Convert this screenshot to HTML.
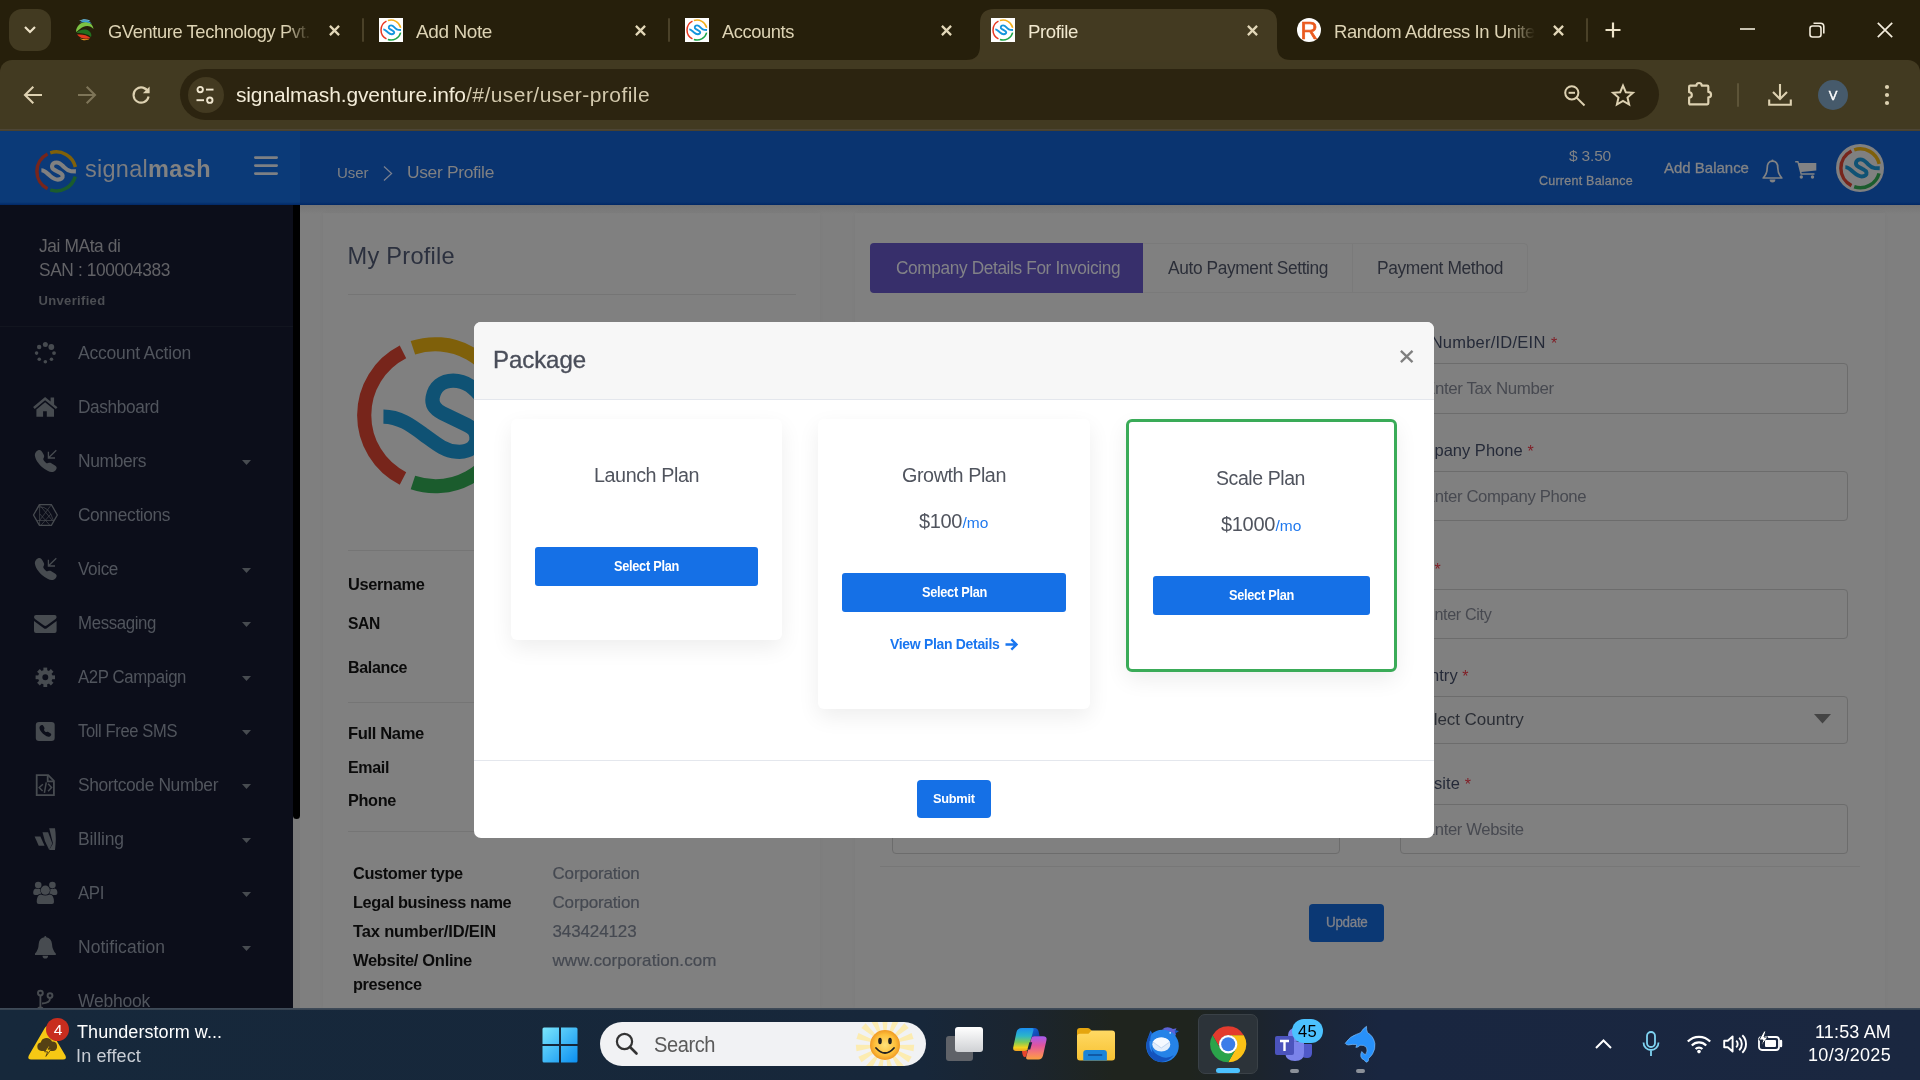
<!DOCTYPE html>
<html lang="en">
<head>
<meta charset="utf-8">
<title>Profile</title>
<style>
html,body{margin:0;padding:0;width:1920px;height:1080px;overflow:hidden;background:#7f7f7f;font-family:"Liberation Sans",sans-serif;}
#root{position:absolute;left:0;top:0;width:1920px;height:1080px;overflow:hidden;will-change:transform;}
.a{position:absolute;box-sizing:border-box;}
.t{position:absolute;white-space:nowrap;line-height:1;transform-origin:0 0;font-family:"Liberation Sans",sans-serif;}
svg{position:absolute;overflow:visible;}
</style>
</head>
<body>
<div id="root">
<!-- ================= APP (dimmed by modal backdrop) ================= -->
<div class="a" style="left:0;top:130px;width:1920px;height:878px;background:#7f7f7f"></div>
<!-- cards -->
<div class="a" style="left:323px;top:213px;width:497px;height:795px;background:#808080;box-shadow:0 0 4px rgba(0,0,0,.035)"></div>
<div class="a" style="left:855px;top:213px;width:1030px;height:795px;background:#808080;box-shadow:0 0 4px rgba(0,0,0,.035)"></div>
<div class="a" style="left:300px;top:205px;width:1620px;height:9px;background:linear-gradient(180deg,rgba(0,0,0,.075),rgba(0,0,0,0))"></div>
<!-- header -->
<div class="a" style="left:0;top:130px;width:1920px;height:75px;background:#0a3470"></div>
<div class="a" style="left:0;top:130px;width:300px;height:75px;background:#0b3a78"></div>
<div class="a" style="left:0;top:202px;width:1920px;height:3px;background:linear-gradient(180deg,rgba(0,30,90,0),rgba(0,38,100,.9))"></div>
<svg style="left:32.6px;top:147.6px;--c1:#77251b;--c2:#7f600a;--c3:#1b5c2d;--c4:#808080;--sw:0.18;--sw4:0.21" width="46.8" height="46.8"><use href="#sm" width="46.8" height="46.8"/></svg>
<svg style="left:253px;top:155px" width="26" height="21" viewBox="0 0 26 21"><path d="M2.3 2.6H23.7M2.3 10.6H23.7M2.3 18.6H23.7" stroke="#7e8084" stroke-width="2.6" stroke-linecap="round" fill="none"/></svg>
<svg style="left:383px;top:165.5px" width="10" height="15" viewBox="0 0 10 15"><path d="M1 0.5L8.6 7.5L1 14.5" stroke="#7a8090" stroke-width="1.2" fill="none"/></svg>
<!-- bell -->
<svg style="left:1760px;top:158px" width="25" height="26" viewBox="0 0 25 26"><path d="M12.5 3.2C8.5 3.2 7.2 6.5 7.2 10C7.2 15 5.5 17.5 3.2 20H21.8C19.5 17.5 17.8 15 17.8 10C17.8 6.5 16.5 3.2 12.5 3.2Z" fill="none" stroke="#818284" stroke-width="1.7" stroke-linejoin="round"/><circle cx="12.5" cy="2.7" r="1.1" fill="#818284"/><path d="M9.6 21.6A2.9 2.9 0 0 0 15.4 21.6Z" fill="#818284"/></svg>
<!-- cart -->
<svg style="left:1794px;top:160px" width="24" height="20" viewBox="0 0 24 20"><path d="M1.2 1H4.4L5 3H22.3V10.4L7.4 12L7.8 13.3H20.5V14.8H6.6L3.4 2.6H1.2Z" fill="#818284"/><circle cx="7.3" cy="17" r="1.7" fill="#818284"/><circle cx="18.5" cy="17" r="1.7" fill="#818284"/></svg>
<!-- avatar -->
<div class="a" style="left:1836px;top:144px;width:48px;height:48px;border-radius:50%;background:#808080"></div>
<svg style="left:1836.7px;top:144.7px;--c1:#77251b;--c2:#7f600a;--c3:#1b5c2d;--c4:#0f5274;--sw:0.18;--sw4:0.2" width="46.6" height="46.6"><use href="#sm" width="46.6" height="46.6"/></svg>
<!-- sidebar -->
<div class="a" style="left:0;top:205px;width:293px;height:803px;background:#0c0e1a"></div>
<div class="a" style="left:0;top:326px;width:293px;height:1px;background:#12151f"></div>
<div class="a" style="left:293px;top:205px;width:7px;height:803px;background:#7a7a7a"></div>
<div class="a" style="left:293px;top:205px;width:7px;height:614px;background:#000;border-radius:0 0 3.5px 3.5px"></div>
<!-- sidebar icons -->
<svg style="left:25px;top:335px" width="80" height="45" viewBox="0 0 80 45" fill="#474b50"><circle cx="20.33" cy="9.5" r="2.5"/><circle cx="26.33" cy="12" r="2.9"/><circle cx="29.04" cy="18.1" r="1.9"/><circle cx="26.46" cy="24.3" r="1.8"/><circle cx="20.33" cy="26.75" r="1.8"/><circle cx="14.25" cy="24.3" r="1.8"/><circle cx="11.58" cy="18.1" r="1.8"/><circle cx="14.17" cy="12" r="2.2"/></svg>
<svg style="left:25px;top:385px" width="80" height="45" viewBox="0 0 80 45" fill="#474b50"><g transform="translate(7.9 11.9)"><path d="M0.2 10L12.2 0.2L17.7 4.7V0.5H21.2V7.5L24.6 10.3L23 12.2L12.2 3.4L1.8 12Z"/><path d="M3.5 12.5L12.2 5.4L21.1 12.6V19.8H13.9V14.3H10.2V19.8H3.5Z"/></g></svg>
<svg style="left:25px;top:439px" width="80" height="45" viewBox="0 0 80 45"><g transform="translate(9 10.8)"><path d="M1 6.5C0.5 4 2 1 5 0.3C6.5 0 7.5 1 8.5 2.8L10 5.5C10.5 7 9.8 8 9.3 9C9 10 10.5 12 12.5 13.5C14 13.5 15 12.5 16.5 13L21 15.8C23 17 23 18.5 22 20C21 21.5 19.5 22.3 17.5 22.3C13 21.5 8 18 4.5 13.5C2.5 11 1.5 9 1 6.5Z" fill="#474b50"/><path d="M22.3 0.5L14.6 7.9M14.4 2V8.2H21" fill="none" stroke="#474b50" stroke-width="1.3"/></g></svg>
<svg style="left:25px;top:493px" width="80" height="45" viewBox="0 0 80 45" fill="none" stroke="#474b50"><g transform="translate(7.9 11)"><path d="M0.6 11L6.5 0.7H18.5L24.4 11L18.5 21.3H6.5Z" stroke-width="1.3"/><path d="M6.5 0.7L19.5 16.5M18.5 0.7L6.7 16.5M6.7 1V21M4 16.5H21M8 21.3L18 10M17 21.3L7 10M6.7 3Q16 2 20.5 16.5M3 7L6.7 1" stroke-width="0.7"/></g></svg>
<svg style="left:25px;top:547px" width="80" height="45" viewBox="0 0 80 45"><g transform="translate(9 10.8)"><path d="M1 6.5C0.5 4 2 1 5 0.3C6.5 0 7.5 1 8.5 2.8L10 5.5C10.5 7 9.8 8 9.3 9C9 10 10.5 12 12.5 13.5C14 13.5 15 12.5 16.5 13L21 15.8C23 17 23 18.5 22 20C21 21.5 19.5 22.3 17.5 22.3C13 21.5 8 18 4.5 13.5C2.5 11 1.5 9 1 6.5Z" fill="#474b50"/><path d="M22.3 0.5L14.6 7.9M14.4 2V8.2H21" fill="none" stroke="#474b50" stroke-width="1.3"/></g></svg>
<svg style="left:25px;top:601px" width="80" height="45" viewBox="0 0 80 45" fill="#474b50"><g transform="translate(9 14)"><path d="M2 0H20.6Q22.6 0 22.6 2Q22.6 3.2 21.6 3.9L12.6 10.6Q11.3 11.5 10 10.6L1 3.9Q0 3.2 0 2Q0 0 2 0Z"/><path d="M0 6L9.8 13.2Q11.3 14.2 12.8 13.2L22.6 6V16Q22.6 18 20.6 18H2Q0 18 0 16Z"/></g></svg>
<svg style="left:25px;top:655px" width="80" height="45" viewBox="0 0 80 45"><g transform="translate(20.3 22.3)"><circle r="5.1" fill="none" stroke="#474b50" stroke-width="4.3"/><g fill="#474b50"><rect x="-1.9" y="-9.7" width="3.8" height="3.4"/><rect x="-1.9" y="-9.7" width="3.8" height="3.4" transform="rotate(45)"/><rect x="-1.9" y="-9.7" width="3.8" height="3.4" transform="rotate(90)"/><rect x="-1.9" y="-9.7" width="3.8" height="3.4" transform="rotate(135)"/><rect x="-1.9" y="-9.7" width="3.8" height="3.4" transform="rotate(180)"/><rect x="-1.9" y="-9.7" width="3.8" height="3.4" transform="rotate(225)"/><rect x="-1.9" y="-9.7" width="3.8" height="3.4" transform="rotate(270)"/><rect x="-1.9" y="-9.7" width="3.8" height="3.4" transform="rotate(315)"/></g></g></svg>
<svg style="left:25px;top:709px" width="80" height="45" viewBox="0 0 80 45"><rect x="10.8" y="12.9" width="18.9" height="19" rx="3.2" fill="#474b50"/><g transform="translate(14 15.8) scale(0.54)"><path d="M1 6.5C0.5 4 2 1 5 0.3C6.5 0 7.5 1 8.5 2.8L10 5.5C10.5 7 9.8 8 9.3 9C9 10 10.5 12 12.5 13.5C14 13.5 15 12.5 16.5 13L21 15.8C23 17 23 18.5 22 20C21 21.5 19.5 22.3 17.5 22.3C13 21.5 8 18 4.5 13.5C2.5 11 1.5 9 1 6.5Z" fill="#0c0e1a"/></g></svg>
<svg style="left:25px;top:763px" width="80" height="45" viewBox="0 0 80 45" fill="none" stroke="#474b50"><path d="M11.7 12.1H23.2L28.9 17.8V32.2H11.7Z" stroke-width="1.8"/><path d="M22.7 12.1V18.3H28.9" stroke-width="1.8"/><path d="M17.9 21.2L14.2 24.5L17.6 28.1M21.25 19.4L19.4 29.8M23.1 20.8L26.6 24.5L23.1 28.3" stroke-width="1.5"/></svg>
<svg style="left:25px;top:817px" width="80" height="45" viewBox="0 0 80 45" fill="#474b50"><path d="M9.6 19.4H15.4L19.6 28.75H13.75Z"/><path d="M17.5 15.2H23.1L27.3 26.5L24.2 32.9L19.9 24Z" opacity="0.95"/><path d="M24.2 11.2H30Q31.6 21 30 32.9H24.2L28 26.5Z"/></svg>
<svg style="left:25px;top:871px" width="80" height="45" viewBox="0 0 80 45" fill="#474b50"><circle cx="13.2" cy="14.1" r="3.3"/><circle cx="27.4" cy="14.1" r="3.3"/><path d="M8.2 22Q8.2 17.8 11 17.5Q13 18.5 15.3 17.7Q14.6 20.5 16.3 22.5Q13.5 23 12.7 24H10Q8.2 24 8.2 22Z"/><path d="M32.4 22Q32.4 17.8 29.6 17.5Q27.6 18.5 25.3 17.7Q26 20.5 24.3 22.5Q27.1 23 27.9 24H30.6Q32.4 24 32.4 22Z"/><circle cx="20.3" cy="19.2" r="4.6"/><path d="M11.7 31Q11.7 23.7 16 23.4Q20.3 25.6 24.6 23.4Q29 23.7 29 31Q29 33 27 33H13.7Q11.7 33 11.7 31Z"/></svg>
<svg style="left:25px;top:925px" width="80" height="45" viewBox="0 0 80 45" fill="#474b50"><path d="M20.3 11Q21.3 11 21.3 12.3Q26.5 13.5 27 19Q27.3 25 30.8 28.5V30H10V28.5Q13.5 25 13.7 19Q14 13.5 19.3 12.3Q19.3 11 20.3 11Z"/><path d="M17.5 30.8A2.8 2.8 0 0 0 23.1 30.8Z"/></svg>
<svg style="left:25px;top:975px" width="80" height="45" viewBox="0 0 80 45" fill="none" stroke="#474b50"><circle cx="15.4" cy="18.1" r="2.4" stroke-width="2"/><circle cx="25" cy="20.6" r="2.4" stroke-width="2"/><circle cx="15.4" cy="35" r="2.4" stroke-width="2"/><path d="M15.4 21V32.5M25 23.5Q25 28 17 28.5" stroke-width="1.8"/></svg>
<!-- carets -->
<svg style="left:241.5px;top:459.5px" width="9" height="5" viewBox="0 0 9 5"><path d="M0 0H9L4.5 5Z" fill="#474b50"/></svg>
<svg style="left:241.5px;top:567.5px" width="9" height="5" viewBox="0 0 9 5"><path d="M0 0H9L4.5 5Z" fill="#474b50"/></svg>
<svg style="left:241.5px;top:621.5px" width="9" height="5" viewBox="0 0 9 5"><path d="M0 0H9L4.5 5Z" fill="#474b50"/></svg>
<svg style="left:241.5px;top:675.5px" width="9" height="5" viewBox="0 0 9 5"><path d="M0 0H9L4.5 5Z" fill="#474b50"/></svg>
<svg style="left:241.5px;top:729.5px" width="9" height="5" viewBox="0 0 9 5"><path d="M0 0H9L4.5 5Z" fill="#474b50"/></svg>
<svg style="left:241.5px;top:783.5px" width="9" height="5" viewBox="0 0 9 5"><path d="M0 0H9L4.5 5Z" fill="#474b50"/></svg>
<svg style="left:241.5px;top:837.5px" width="9" height="5" viewBox="0 0 9 5"><path d="M0 0H9L4.5 5Z" fill="#474b50"/></svg>
<svg style="left:241.5px;top:891.5px" width="9" height="5" viewBox="0 0 9 5"><path d="M0 0H9L4.5 5Z" fill="#474b50"/></svg>
<svg style="left:241.5px;top:945.5px" width="9" height="5" viewBox="0 0 9 5"><path d="M0 0H9L4.5 5Z" fill="#474b50"/></svg>

<!-- left card -->
<div class="a" style="left:348px;top:294px;width:448px;height:1px;background:#757575"></div>
<div class="a" style="left:348px;top:550px;width:448px;height:1px;background:#757575"></div>
<div class="a" style="left:348px;top:702px;width:448px;height:1px;background:#757575"></div>
<div class="a" style="left:348px;top:831px;width:448px;height:1px;background:#757575"></div>
<svg style="left:349.8px;top:330.1px;--c1:#77251b;--c2:#7f600a;--c3:#1b5c2d;--c4:#0f5274;" width="170.4" height="170.4"><use href="#smb" width="170.4" height="170.4"/></svg>
<!-- right card tabs -->
<div class="a" style="left:870px;top:243px;width:273px;height:50px;background:#372f6b;border-radius:4px 0 0 4px"></div>
<div class="a" style="left:1143px;top:243px;width:210px;height:50px;border:1px solid #7a7a7a;border-left:none"></div>
<div class="a" style="left:1352px;top:243px;width:176px;height:50px;border:1px solid #7a7a7a;border-radius:0 4px 4px 0"></div>
<!-- inputs -->
<div class="a" style="left:1400px;top:363px;width:448px;height:51px;border:1px solid #6c6c6c;border-radius:4px"></div>
<div class="a" style="left:1400px;top:471px;width:448px;height:50px;border:1px solid #6c6c6c;border-radius:4px"></div>
<div class="a" style="left:1400px;top:589px;width:448px;height:50px;border:1px solid #6c6c6c;border-radius:4px"></div>
<div class="a" style="left:1400px;top:696px;width:448px;height:48px;border:1px solid #6c6c6c;border-radius:4px"></div>
<div class="a" style="left:1400px;top:804px;width:448px;height:50px;border:1px solid #6c6c6c;border-radius:4px"></div>
<div class="a" style="left:892px;top:804px;width:448px;height:50px;border:1px solid #6c6c6c;border-radius:4px"></div>
<svg style="left:1814px;top:714px" width="17" height="10" viewBox="0 0 17 10"><path d="M0 0H17L8.5 9.5Z" fill="#444"/></svg>
<div class="a" style="left:880px;top:866px;width:980px;height:1px;background:#777"></div>
<div class="a" style="left:1309px;top:904px;width:75px;height:38px;background:#0b3874;border-radius:4px"></div>

<span class="t" style="left:85.0px;top:158.0px;font-size:23.5px;font-weight:400;color:#7c7d80;letter-spacing:0.27px;">signal</span>
<span class="t" style="left:148.0px;top:158.0px;font-size:23.5px;font-weight:700;color:#828282;letter-spacing:0.40px;">mash</span>
<span class="t" style="left:337.0px;top:165.1px;font-size:15px;font-weight:400;color:#7e8084;letter-spacing:-0.04px;">User</span>
<span class="t" style="left:407.0px;top:164.0px;font-size:17.4px;font-weight:400;color:#808082;letter-spacing:-0.32px;">User Profile</span>
<span class="t" style="left:1569.0px;top:148.0px;font-size:15.5px;font-weight:400;color:#828385;letter-spacing:-0.18px;">$ 3.50</span>
<span class="t" style="left:1539.0px;top:175.0px;font-size:12.5px;font-weight:400;color:#828385;letter-spacing:0.24px;-webkit-text-stroke:0.3px #828385;">Current Balance</span>
<span class="t" style="left:1664.0px;top:160.1px;font-size:15px;font-weight:400;color:#828385;letter-spacing:-0.01px;-webkit-text-stroke:0.3px #828385;">Add Balance</span>
<span class="t" style="left:38.5px;top:238.0px;font-size:17.5px;font-weight:400;color:#626266;letter-spacing:-0.38px;transform:scaleX(0.9899);">Jai MAta di</span>
<span class="t" style="left:38.5px;top:262.0px;font-size:17.5px;font-weight:400;color:#626266;letter-spacing:-0.38px;transform:scaleX(0.9894);">SAN : 100004383</span>
<span class="t" style="left:38.5px;top:294.1px;font-size:13px;font-weight:700;color:#4c4e53;letter-spacing:0.34px;">Unverified</span>
<span class="t" style="left:78.0px;top:345.0px;font-size:17.5px;font-weight:400;color:#51555d;letter-spacing:-0.20px;">Account Action</span>
<span class="t" style="left:78.0px;top:399.0px;font-size:17.5px;font-weight:400;color:#51555d;letter-spacing:-0.38px;transform:scaleX(0.9859);">Dashboard</span>
<span class="t" style="left:78.0px;top:453.0px;font-size:17.5px;font-weight:400;color:#51555d;letter-spacing:-0.38px;transform:scaleX(0.9955);">Numbers</span>
<span class="t" style="left:78.0px;top:507.0px;font-size:17.5px;font-weight:400;color:#51555d;letter-spacing:-0.38px;transform:scaleX(0.9886);">Connections</span>
<span class="t" style="left:78.0px;top:561.0px;font-size:17.5px;font-weight:400;color:#51555d;letter-spacing:-0.38px;transform:scaleX(0.9783);">Voice</span>
<span class="t" style="left:78.0px;top:615.0px;font-size:17.5px;font-weight:400;color:#51555d;letter-spacing:-0.38px;transform:scaleX(0.9609);">Messaging</span>
<span class="t" style="left:78.0px;top:669.0px;font-size:17.5px;font-weight:400;color:#51555d;letter-spacing:-0.38px;transform:scaleX(0.9577);">A2P Campaign</span>
<span class="t" style="left:78.0px;top:723.0px;font-size:17.5px;font-weight:400;color:#51555d;letter-spacing:-0.38px;transform:scaleX(0.9439);">Toll Free SMS</span>
<span class="t" style="left:78.0px;top:777.0px;font-size:17.5px;font-weight:400;color:#51555d;letter-spacing:-0.38px;transform:scaleX(0.9948);">Shortcode Number</span>
<span class="t" style="left:78.0px;top:831.0px;font-size:17.5px;font-weight:400;color:#51555d;letter-spacing:-0.10px;">Billing</span>
<span class="t" style="left:78.0px;top:885.0px;font-size:17.5px;font-weight:400;color:#51555d;letter-spacing:-0.38px;transform:scaleX(0.9607);">API</span>
<span class="t" style="left:78.0px;top:939.0px;font-size:17.5px;font-weight:400;color:#51555d;letter-spacing:0.04px;">Notification</span>
<span class="t" style="left:78.0px;top:993.0px;font-size:17.5px;font-weight:400;color:#51555d;letter-spacing:-0.23px;">Webhook</span>
<span class="t" style="left:347.5px;top:245.0px;font-size:23.6px;font-weight:400;color:#2b303e;letter-spacing:0.26px;">My Profile</span>
<span class="t" style="left:348.0px;top:576.0px;font-size:17px;font-weight:700;color:#0b0b0b;letter-spacing:-0.37px;transform:scaleX(0.9643);">Username</span>
<span class="t" style="left:348.0px;top:615.0px;font-size:17px;font-weight:700;color:#0b0b0b;letter-spacing:-0.37px;transform:scaleX(0.9200);">SAN</span>
<span class="t" style="left:348.0px;top:659.0px;font-size:17px;font-weight:700;color:#0b0b0b;letter-spacing:-0.37px;transform:scaleX(0.9427);">Balance</span>
<span class="t" style="left:348.0px;top:725.0px;font-size:17px;font-weight:700;color:#0b0b0b;letter-spacing:-0.37px;transform:scaleX(0.9745);">Full Name</span>
<span class="t" style="left:348.0px;top:759.0px;font-size:17px;font-weight:700;color:#0b0b0b;letter-spacing:-0.37px;transform:scaleX(0.9428);">Email</span>
<span class="t" style="left:348.0px;top:792.0px;font-size:17px;font-weight:700;color:#0b0b0b;letter-spacing:-0.37px;transform:scaleX(0.9584);">Phone</span>
<span class="t" style="left:353.0px;top:865.0px;font-size:16.5px;font-weight:700;color:#0b0b0b;letter-spacing:-0.36px;transform:scaleX(0.9900);">Customer type</span>
<span class="t" style="left:353.0px;top:894.0px;font-size:16.5px;font-weight:700;color:#0b0b0b;letter-spacing:-0.36px;transform:scaleX(0.9887);">Legal business name</span>
<span class="t" style="left:353.0px;top:923.0px;font-size:16.5px;font-weight:700;color:#0b0b0b;letter-spacing:-0.15px;">Tax number/ID/EIN</span>
<span class="t" style="left:353.0px;top:952.0px;font-size:16.5px;font-weight:700;color:#0b0b0b;letter-spacing:-0.31px;">Website/ Online</span>
<span class="t" style="left:353.0px;top:976.0px;font-size:16.5px;font-weight:700;color:#0b0b0b;letter-spacing:-0.36px;transform:scaleX(0.9876);">presence</span>
<span class="t" style="left:552.5px;top:865.0px;font-size:17px;font-weight:400;color:#454951;letter-spacing:-0.17px;-webkit-text-stroke:0.2px #454951;">Corporation</span>
<span class="t" style="left:552.5px;top:894.0px;font-size:17px;font-weight:400;color:#454951;letter-spacing:-0.17px;-webkit-text-stroke:0.2px #454951;">Corporation</span>
<span class="t" style="left:552.5px;top:923.0px;font-size:17px;font-weight:400;color:#454951;letter-spacing:-0.12px;-webkit-text-stroke:0.2px #454951;">343424123</span>
<span class="t" style="left:552.5px;top:952.0px;font-size:17px;font-weight:400;color:#454951;letter-spacing:0.08px;-webkit-text-stroke:0.2px #454951;">www.corporation.com</span>
<span class="t" style="left:895.5px;top:260.0px;font-size:17.5px;font-weight:400;color:#828287;letter-spacing:-0.38px;transform:scaleX(0.9862);">Company Details For Invoicing</span>
<span class="t" style="left:1168.0px;top:260.0px;font-size:17.5px;font-weight:400;color:#2b2e38;letter-spacing:-0.38px;transform:scaleX(0.9902);">Auto Payment Setting</span>
<span class="t" style="left:1377.0px;top:260.0px;font-size:17.5px;font-weight:400;color:#2b2e38;letter-spacing:-0.38px;transform:scaleX(0.9929);">Payment Method</span>
<span class="t" style="left:1399.5px;top:334.0px;font-size:16.5px;font-weight:400;color:#252a38;letter-spacing:0.23px;">Tax Number/ID/EIN</span>
<span class="t" style="left:1551.0px;top:336.0px;font-size:16px;font-weight:400;color:#801e26;">*</span>
<span class="t" style="left:1399.6px;top:442.0px;font-size:16.5px;font-weight:400;color:#252a38;letter-spacing:0.01px;">Company Phone</span>
<span class="t" style="left:1527.5px;top:444.0px;font-size:16px;font-weight:400;color:#801e26;">*</span>
<span class="t" style="left:1402.0px;top:560.0px;font-size:16.5px;font-weight:400;color:#252a38;letter-spacing:-0.11px;">City</span>
<span class="t" style="left:1434.5px;top:562.0px;font-size:16px;font-weight:400;color:#801e26;">*</span>
<span class="t" style="left:1399.7px;top:667.0px;font-size:16.5px;font-weight:400;color:#252a38;letter-spacing:0.03px;">Country</span>
<span class="t" style="left:1462.3px;top:669.0px;font-size:16px;font-weight:400;color:#801e26;">*</span>
<span class="t" style="left:1400.0px;top:775.0px;font-size:16.5px;font-weight:400;color:#252a38;letter-spacing:0.10px;">Website</span>
<span class="t" style="left:1464.7px;top:777.0px;font-size:16px;font-weight:400;color:#801e26;">*</span>
<span class="t" style="left:1424.0px;top:380.0px;font-size:17px;font-weight:400;color:#474950;letter-spacing:-0.37px;transform:scaleX(0.9930);">Enter Tax Number</span>
<span class="t" style="left:1424.0px;top:488.0px;font-size:17px;font-weight:400;color:#474950;letter-spacing:-0.37px;transform:scaleX(0.9831);">Enter Company Phone</span>
<span class="t" style="left:1424.0px;top:606.0px;font-size:17px;font-weight:400;color:#474950;letter-spacing:-0.37px;transform:scaleX(0.9506);">Enter City</span>
<span class="t" style="left:1413.0px;top:711.0px;font-size:17px;font-weight:400;color:#2b2e35;letter-spacing:-0.05px;">Select Country</span>
<span class="t" style="left:1424.0px;top:821.0px;font-size:17px;font-weight:400;color:#474950;letter-spacing:-0.37px;transform:scaleX(0.9793);">Enter Website</span>
<span class="t" style="left:1326.2px;top:915.0px;font-size:14px;font-weight:400;color:#808288;letter-spacing:-0.31px;transform:scaleX(0.9582);-webkit-text-stroke:0.3px #808288;">Update</span>
<!-- ================= MODAL ================= -->
<div class="a" style="left:474px;top:322px;width:960px;height:516px;background:#fff;border-radius:7px;overflow:hidden">
 <div class="a" style="left:0;top:0;width:960px;height:78px;background:#f7f7f7;border-bottom:1px solid #e4e7ed"></div>
 <div class="a" style="left:0;top:438px;width:960px;height:1px;background:#e4e7ed"></div>
</div>
<svg style="left:1399.7px;top:350px" width="13.4" height="13" viewBox="0 0 13.4 13"><path d="M0.9 0.9L12.5 12.1M12.5 0.9L0.9 12.1" stroke="#7f7f7f" stroke-width="2.3" fill="none"/></svg>
<div class="a" style="left:511px;top:419px;width:271px;height:221px;background:#fff;border-radius:6px;box-shadow:0 8px 22px rgba(0,0,0,.07)"></div>
<div class="a" style="left:818px;top:419px;width:272px;height:290px;background:#fff;border-radius:6px;box-shadow:0 8px 22px rgba(0,0,0,.07)"></div>
<div class="a" style="left:1126px;top:419px;width:271px;height:253px;background:#fff;border:3px solid #3aab58;border-radius:6px;box-shadow:0 8px 22px rgba(0,0,0,.07)"></div>
<div class="a" style="left:535px;top:547px;width:223px;height:39px;background:#1570e6;border-radius:3px"></div>
<div class="a" style="left:842px;top:573px;width:224px;height:39px;background:#1570e6;border-radius:3px"></div>
<div class="a" style="left:1153px;top:576px;width:217px;height:39px;background:#1570e6;border-radius:3px"></div>
<svg style="left:1005px;top:638px" width="13" height="13" viewBox="0 0 13 13"><path d="M0.5 6.5H11M6.3 1.3L11.5 6.5L6.3 11.7" stroke="#1976f0" stroke-width="2.4" fill="none"/></svg>
<div class="a" style="left:917px;top:780px;width:74px;height:38px;background:#1570e6;border-radius:4px"></div>

<span class="t" style="left:493.0px;top:348.0px;font-size:24px;font-weight:400;color:#4a4e5a;letter-spacing:-0.06px;-webkit-text-stroke:0.35px #4a4e5a;">Package</span>
<span class="t" style="left:594.0px;top:465.0px;font-size:20px;font-weight:400;color:#50545e;letter-spacing:-0.44px;transform:scaleX(0.9872);">Launch Plan</span>
<span class="t" style="left:902.0px;top:465.0px;font-size:20px;font-weight:400;color:#50545e;letter-spacing:-0.44px;transform:scaleX(0.9884);">Growth Plan</span>
<span class="t" style="left:1216.0px;top:468.0px;font-size:20px;font-weight:400;color:#50545e;letter-spacing:-0.44px;transform:scaleX(0.9756);">Scale Plan</span>
<span class="t" style="left:919.0px;top:511.0px;font-size:20px;font-weight:400;color:#50545e;letter-spacing:-0.38px;">$100</span>
<span class="t" style="left:962.5px;top:515.0px;font-size:15.5px;font-weight:400;color:#2079ee;letter-spacing:0.05px;">/mo</span>
<span class="t" style="left:1221.0px;top:514.0px;font-size:20px;font-weight:400;color:#50545e;letter-spacing:-0.33px;">$1000</span>
<span class="t" style="left:1275.5px;top:518.0px;font-size:15.5px;font-weight:400;color:#2079ee;letter-spacing:0.05px;">/mo</span>
<span class="t" style="left:614.0px;top:559.0px;font-size:14px;font-weight:700;color:#ffffff;letter-spacing:-0.31px;transform:scaleX(0.9114);">Select Plan</span>
<span class="t" style="left:921.5px;top:585.0px;font-size:14px;font-weight:700;color:#ffffff;letter-spacing:-0.31px;transform:scaleX(0.9114);">Select Plan</span>
<span class="t" style="left:1229.0px;top:588.0px;font-size:14px;font-weight:700;color:#ffffff;letter-spacing:-0.31px;transform:scaleX(0.9114);">Select Plan</span>
<span class="t" style="left:890.0px;top:637.0px;font-size:14px;font-weight:700;color:#1976f0;letter-spacing:-0.31px;transform:scaleX(0.9984);">View Plan Details</span>
<span class="t" style="left:933.1px;top:792.0px;font-size:13.5px;font-weight:700;color:#ffffff;letter-spacing:-0.30px;transform:scaleX(0.9484);">Submit</span>
<!-- ================= BROWSER CHROME ================= -->
<svg width="0" height="0" style="left:0;top:0">
 <defs>
  <symbol id="sm" viewBox="-1.2 -1.2 2.4 2.4">
   <g fill="none" style="stroke-width:var(--sw,0.15)">
    <path d="M-0.454 0.891A1 1 0 0 1 -0.454 -0.891" stroke="var(--c1)"/>
    <path d="M-0.314 -0.949A1 1 0 0 1 0.974 -0.225" stroke="var(--c2)"/>
    <path d="M0.966 0.259A1 1 0 0 1 -0.314 0.949" stroke="var(--c3)"/>
    <path d="M-0.77 -0.06C-0.6 -0.06 -0.48 0.1 -0.33 0.22C-0.2 0.33 -0.08 0.42 0.07 0.42C0.25 0.42 0.34 0.32 0.32 0.22C0.3 0.12 0.22 0.09 0.12 0.04L-0.1 -0.08C-0.2 -0.13 -0.24 -0.2 -0.22 -0.3C-0.2 -0.4 -0.1 -0.46 0.01 -0.46C0.18 -0.46 0.28 -0.33 0.39 -0.22C0.5 -0.11 0.6 -0.03 0.75 -0.01L1 0" stroke="var(--c4)" style="stroke-width:var(--sw4,0.19)"/>
   </g>
  </symbol>
  <symbol id="smb" viewBox="-1.2 -1.2 2.4 2.4">
   <g fill="none" stroke-width="0.2">
    <path d="M-0.454 0.891A1 1 0 0 1 -0.454 -0.891" stroke="var(--c1)"/>
    <path d="M-0.314 -0.949A1 1 0 0 1 0.974 -0.225" stroke="var(--c2)"/>
    <path d="M0.966 0.259A1 1 0 0 1 -0.314 0.949" stroke="var(--c3)"/>
    <path d="M-0.729 0.019C-0.5 0.02 -0.33 0.15 -0.17 0.268C0 0.39 0.12 0.5 0.3 0.514C0.5 0.53 0.6 0.42 0.58 0.3C0.57 0.22 0.53 0.18 0.45 0.14L0.1 -0.03C-0.02 -0.09 -0.05 -0.17 -0.036 -0.249C-0.01 -0.4 0.1 -0.488 0.253 -0.488C0.5 -0.488 0.6 -0.3 0.75 -0.15C0.85 -0.05 0.92 0 1 0" stroke="var(--c4)" stroke-width="0.2"/>
   </g>
  </symbol>
  <symbol id="tx" viewBox="0 0 12 12"><path d="M1 1L11 11M11 1L1 11" stroke="#e2d7b8" stroke-width="2.5" fill="none"/></symbol>
 </defs>
</svg>
<div class="a" style="left:0;top:0;width:1920px;height:130px;background:#261f0b"></div>
<div class="a" style="left:0;top:60px;width:1920px;height:70px;background:#423a21;border-radius:12px 12px 0 0"></div>
<div class="a" style="left:0;top:129px;width:1920px;height:2px;background:linear-gradient(180deg,#4f4738,#473f2c)"></div>
<!-- tab search -->
<div class="a" style="left:9px;top:9px;width:42px;height:42px;border-radius:13px;background:#423a21"></div>
<svg style="left:23px;top:25px" width="14" height="10" viewBox="0 0 14 10"><path d="M2 2L7 7L12 2" fill="none" stroke="#ece2c8" stroke-width="2.2"/></svg>
<!-- active tab -->
<svg style="left:960px;top:0" width="340" height="62" viewBox="960 0 340 62"><path d="M966 60Q980 60 980 46L980 23Q980 9 994 9L1263 9Q1277 9 1277 23L1277 46Q1277 60 1291 60L1291 62L966 62Z" fill="#433a21"/></svg>
<!-- separators -->
<div class="a" style="left:361.7px;top:18px;width:2.6px;height:24px;background:#4a4128;border-radius:1.3px"></div>
<div class="a" style="left:667.7px;top:18px;width:2.6px;height:24px;background:#4a4128;border-radius:1.3px"></div>
<div class="a" style="left:1585.7px;top:18px;width:2.6px;height:24px;background:#4a4128;border-radius:1.3px"></div>
<!-- favicons -->
<svg style="left:74px;top:19px" width="21" height="22" viewBox="0 0 21 22">
 <path d="M2 13C2 7 7 3 12 3C16 3 19 6 19.5 10C17 7 13 6 9 8C5 10 3 13 2 13Z" fill="#7cc243"/>
 <path d="M6 3.5C9 0.5 15 1 18 5C15 3 10 3 6 3.5Z" fill="#3aa0d8"/>
 <path d="M5 2C9 -0.5 14 0 16.5 2.2C13 1.3 9 1.3 5 2Z" fill="#6cc6ee"/>
 <path d="M2.5 14C5 11 11 9 15 12C17 13.5 18 16 17 18C14 15 9 14 2.5 14Z" fill="#23711f"/>
 <path d="M3 15.5C8 15 13 16 16.5 19C12 20.5 6 19.5 3 15.5Z" fill="#e23a1e"/>
 <path d="M6 19.5C9 20.3 13 20.5 15.5 19.8C13 21.8 8.5 21.8 6 19.5Z" fill="#f39a1d"/>
</svg>
<div class="a" style="left:379px;top:18px;width:24px;height:24px;background:#fff"></div>
<svg style="left:379px;top:18px;--c1:#e8371f;--c2:#f4b01c;--c3:#1ea64a;--c4:#1496dc" width="24" height="24"><use href="#sm" width="24" height="24"/></svg>
<div class="a" style="left:685px;top:18px;width:24px;height:24px;background:#fff"></div>
<svg style="left:685px;top:18px;--c1:#e8371f;--c2:#f4b01c;--c3:#1ea64a;--c4:#1496dc" width="24" height="24"><use href="#sm" width="24" height="24"/></svg>
<div class="a" style="left:991px;top:18px;width:24px;height:24px;background:#fff"></div>
<svg style="left:991px;top:18px;--c1:#e8371f;--c2:#f4b01c;--c3:#1ea64a;--c4:#1496dc" width="24" height="24"><use href="#sm" width="24" height="24"/></svg>
<div class="a" style="left:1297px;top:18px;width:24px;height:24px;border-radius:50%;background:#fff"></div>

<!-- tab close buttons -->
<svg style="left:328.5px;top:24.5px" width="11" height="11"><use href="#tx" width="11" height="11"/></svg>
<svg style="left:634.5px;top:24.5px" width="11" height="11"><use href="#tx" width="11" height="11"/></svg>
<svg style="left:940.5px;top:24.5px" width="11" height="11"><use href="#tx" width="11" height="11"/></svg>
<svg style="left:1246.5px;top:24.5px" width="11" height="11"><use href="#tx" width="11" height="11"/></svg>
<svg style="left:1552.5px;top:24.5px" width="11" height="11"><use href="#tx" width="11" height="11"/></svg>
<!-- new tab, window controls -->
<svg style="left:1605px;top:22px" width="16" height="16" viewBox="0 0 16 16"><path d="M8 0.5V15.5M0.5 8H15.5" stroke="#ece2c8" stroke-width="2.2" fill="none"/></svg>
<svg style="left:1740px;top:28px" width="15" height="2" viewBox="0 0 15 2"><path d="M0 1H15" stroke="#f3ecdc" stroke-width="1.6"/></svg>
<svg style="left:1809px;top:22px" width="16" height="16" viewBox="0 0 16 16"><rect x="1" y="4" width="11" height="11" rx="2.5" fill="none" stroke="#f3ecdc" stroke-width="1.6"/><path d="M4.5 1.2H11.5Q14.8 1.2 14.8 4.5V11.5" fill="none" stroke="#f3ecdc" stroke-width="1.6"/></svg>
<svg style="left:1877px;top:22px" width="16" height="16" viewBox="0 0 16 16"><path d="M0.8 0.8L15.2 15.2M15.2 0.8L0.8 15.2" stroke="#f3ecdc" stroke-width="1.7" fill="none"/></svg>
<!-- toolbar buttons -->
<svg style="left:23px;top:85px" width="20" height="20" viewBox="0 0 20 20"><path d="M19 10H2.5M10.3 1.8L2 10L10.3 18.2" fill="none" stroke="#ddd1b1" stroke-width="2.1"/></svg>
<svg style="left:77px;top:85px" width="20" height="20" viewBox="0 0 20 20"><path d="M1 10H17.5M9.7 1.8L18 10L9.7 18.2" fill="none" stroke="#7e7558" stroke-width="2.1"/></svg>
<svg style="left:131px;top:85px" width="20" height="20" viewBox="0 0 20 20"><path d="M17.2 7.2A7.6 7.6 0 1 0 17.6 11.5" fill="none" stroke="#ddd1b1" stroke-width="2.1"/><path d="M18.6 1.5V8.2H11.9Z" fill="#ddd1b1"/></svg>
<!-- omnibox -->
<div class="a" style="left:180px;top:69px;width:1479px;height:51px;border-radius:25.5px;background:#2c2410"></div>
<div class="a" style="left:187.5px;top:77px;width:36px;height:36px;border-radius:50%;background:#433a21"></div>
<svg style="left:195px;top:85px" width="20" height="20" viewBox="0 0 20 20"><g fill="none" stroke="#efe6cf" stroke-width="1.9"><circle cx="5.2" cy="4.6" r="2.7"/><path d="M11 4.6H18.5"/><circle cx="14.8" cy="15.2" r="2.7"/><path d="M1.5 15.2H9"/></g></svg>
<svg style="left:1563px;top:84px" width="23" height="23" viewBox="0 0 23 23"><g fill="none" stroke="#ddd1b1" stroke-width="2"><circle cx="8.8" cy="8.8" r="6.6"/><path d="M13.6 13.6L21.5 21.5"/><path d="M5.6 8.8H12"/></g></svg>
<svg style="left:1611px;top:83px" width="24" height="24" viewBox="0 0 24 24"><path d="M12 2.6L14.8 9.2L21.9 9.8L16.5 14.5L18.1 21.5L12 17.8L5.9 21.5L7.5 14.5L2.1 9.8L9.2 9.2Z" fill="none" stroke="#ddd1b1" stroke-width="2" stroke-linejoin="miter"/></svg>
<svg style="left:1686.3px;top:79.7px" width="27" height="27" viewBox="0 0 26 26"><path d="M4 5.5H10A2.6 2.6 0 0 1 15.2 5.5H20.5Q21.5 5.5 21.5 6.5V11.5A2.6 2.6 0 0 1 21.5 16.7V22.5Q21.5 23.5 20.5 23.5H4Q3 23.5 3 22.5V17A2.6 2.6 0 0 0 3 11.8V6.5Q3 5.5 4 5.5Z" fill="none" stroke="#ddd1b1" stroke-width="2.1" stroke-linejoin="round"/></svg>
<div class="a" style="left:1737px;top:83px;width:2px;height:24px;background:#5d5438;border-radius:1px"></div>
<svg style="left:1768px;top:83px" width="24" height="24" viewBox="0 0 24 24"><g fill="none" stroke="#ddd1b1" stroke-width="2.1"><path d="M12 1V15.5M5 9L12 16L19 9"/><path d="M1.2 16.5V21.8H22.8V16.5"/></g></svg>
<div class="a" style="left:1818px;top:80px;width:30px;height:30px;border-radius:50%;background:#465a6b"></div>
<svg style="left:1884px;top:84px" width="6" height="22" viewBox="0 0 6 22"><g fill="#ddd1b1"><circle cx="3" cy="3" r="2.1"/><circle cx="3" cy="11" r="2.1"/><circle cx="3" cy="19" r="2.1"/></g></svg>

<span class="t" style="left:108.0px;top:22.0px;font-size:19px;font-weight:400;color:#ddd3b4;letter-spacing:-0.42px;transform:scaleX(0.9650);">GVenture Technology Pvt.</span>
<span class="t" style="left:416.0px;top:22.0px;font-size:19px;font-weight:400;color:#ddd3b4;letter-spacing:-0.40px;">Add Note</span>
<span class="t" style="left:722.0px;top:22.0px;font-size:19px;font-weight:400;color:#ddd3b4;letter-spacing:-0.42px;transform:scaleX(0.9624);">Accounts</span>
<span class="t" style="left:1028.0px;top:22.0px;font-size:19px;font-weight:400;color:#f1e8cf;letter-spacing:-0.42px;transform:scaleX(0.9817);">Profile</span>
<span class="t" style="left:1334.0px;top:22.0px;font-size:19px;font-weight:400;color:#ddd3b4;letter-spacing:-0.42px;transform:scaleX(0.9715);">Random Address In Unite</span>
<span class="t" style="left:1300.5px;top:19.0px;font-size:24px;font-weight:400;color:#ea5a1f;-webkit-text-stroke:0.7px #ea5a1f;">R</span>
<span class="t" style="left:236.0px;top:84.0px;font-size:21px;font-weight:400;color:#f3ecd8;letter-spacing:-0.15px;">signalmash.gventure.info</span>
<span class="t" style="left:466.0px;top:84.0px;font-size:21px;font-weight:400;color:#d3c9ad;letter-spacing:0.45px;">/#/user/user-profile</span>
<span class="t" style="left:1828.7px;top:89.0px;font-size:13px;font-weight:400;color:#ffffff;-webkit-text-stroke:0.4px #fff;">V</span>
<!-- tab title fades -->
<div class="a" style="left:286px;top:20px;width:28px;height:24px;background:linear-gradient(90deg,rgba(38,31,11,0),#261f0b 90%)"></div>
<div class="a" style="left:1508px;top:20px;width:30px;height:24px;background:linear-gradient(90deg,rgba(38,31,11,0),#261f0b 90%)"></div>

<!-- ================= TASKBAR ================= -->
<div class="a" style="left:0;top:1008px;width:1920px;height:72px;background:linear-gradient(90deg,#16283b 0%,#17273a 48%,#1b2530 53%,#1f241e 58%,#1f241e 62%,#1b2433 67%,#192640 72%,#1a2740 100%)"></div>
<div class="a" style="left:0;top:1008px;width:1920px;height:2px;background:linear-gradient(180deg,#424d5a,#35414f)"></div>
<!-- weather -->
<svg style="left:27px;top:1022px" width="41" height="39" viewBox="0 0 41 39"><path d="M17.6 6.2Q19.9 2.2 22.2 6.2L38.4 33.5Q40.2 37.6 36 37.6H4.2Q0 37.6 1.8 33.5Z" fill="#f5c814"/><path d="M14.5 29A4.3 4.3 0 0 1 13.7 20.5A6 6 0 0 1 25 19.5A4.8 4.8 0 0 1 26.2 29Z" fill="#554114"/><path d="M21.5 24L17.6 29.8H20.6L18.9 34.4L24.2 27.2H21L22.9 24Z" fill="#f5c814" stroke="#554114" stroke-width="0.9"/></svg>
<div class="a" style="left:46.3px;top:1017.7px;width:23px;height:23px;border-radius:50%;background:#c82d1e"></div>
<!-- start -->
<svg style="left:542px;top:1027px" width="36" height="36" viewBox="0 0 36 36"><defs><linearGradient id="wg" x1="0" y1="0" x2="1" y2="1"><stop offset="0" stop-color="#7ae6fc"/><stop offset="1" stop-color="#0b8ff2"/></linearGradient></defs><path d="M0.5 2Q0.5 0.5 2 0.5H17V17H0.5ZM19 0.5H34Q35.5 0.5 35.5 2V17H19ZM0.5 19H17V35.5H2Q0.5 35.5 0.5 34ZM19 19H35.5V34Q35.5 35.5 34 35.5H19Z" fill="url(#wg)"/></svg>
<!-- search -->
<div class="a" style="left:600px;top:1022px;width:326px;height:44px;border-radius:22px;background:#f1f2f4;overflow:hidden"><svg style="left:255px;top:-7px" width="60" height="60" viewBox="-30 -30 60 60"><defs><radialGradient id="sg"><stop offset="0" stop-color="#ffe27a"/><stop offset="0.7" stop-color="#fdbf3a"/><stop offset="1" stop-color="#f09a25"/></radialGradient></defs><g fill="#ffeaa0" opacity="0.8"><path d="M-3.2 -29L3.2 -29L1.4 -13L-1.4 -13Z" transform="rotate(0)"/><path d="M-3.2 -29L3.2 -29L1.4 -13L-1.4 -13Z" transform="rotate(24)"/><path d="M-3.2 -29L3.2 -29L1.4 -13L-1.4 -13Z" transform="rotate(48)"/><path d="M-3.2 -29L3.2 -29L1.4 -13L-1.4 -13Z" transform="rotate(72)"/><path d="M-3.2 -29L3.2 -29L1.4 -13L-1.4 -13Z" transform="rotate(96)"/><path d="M-3.2 -29L3.2 -29L1.4 -13L-1.4 -13Z" transform="rotate(120)"/><path d="M-3.2 -29L3.2 -29L1.4 -13L-1.4 -13Z" transform="rotate(144)"/><path d="M-3.2 -29L3.2 -29L1.4 -13L-1.4 -13Z" transform="rotate(168)"/><path d="M-3.2 -29L3.2 -29L1.4 -13L-1.4 -13Z" transform="rotate(192)"/><path d="M-3.2 -29L3.2 -29L1.4 -13L-1.4 -13Z" transform="rotate(216)"/><path d="M-3.2 -29L3.2 -29L1.4 -13L-1.4 -13Z" transform="rotate(240)"/><path d="M-3.2 -29L3.2 -29L1.4 -13L-1.4 -13Z" transform="rotate(264)"/><path d="M-3.2 -29L3.2 -29L1.4 -13L-1.4 -13Z" transform="rotate(288)"/><path d="M-3.2 -29L3.2 -29L1.4 -13L-1.4 -13Z" transform="rotate(312)"/><path d="M-3.2 -29L3.2 -29L1.4 -13L-1.4 -13Z" transform="rotate(336)"/></g><circle r="15" fill="url(#sg)"/><ellipse cx="-5" cy="-4" rx="1.8" ry="3.2" fill="#222"/><ellipse cx="5" cy="-4" rx="1.8" ry="3.2" fill="#222"/><path d="M-9 3Q0 13 9 3" fill="none" stroke="#222" stroke-width="1.8" stroke-linecap="round"/></svg></div>
<svg style="left:615px;top:1032.3px" width="24" height="24" viewBox="0 0 24 24"><circle cx="9.5" cy="9.5" r="7.6" fill="none" stroke="#333" stroke-width="2.2"/><path d="M15 15L21.5 21.5" stroke="#333" stroke-width="2.6" stroke-linecap="round"/></svg>

<!-- task view -->
<div class="a" style="left:946px;top:1036px;width:27px;height:25px;border-radius:3px;background:#5f6268"></div>
<div class="a" style="left:955px;top:1027px;width:28px;height:25px;border-radius:3px;background:linear-gradient(180deg,#fff,#cfd1d4)"></div>
<!-- copilot -->
<svg style="left:1013px;top:1028px" width="34" height="32" viewBox="0 0 34 32"><defs><linearGradient id="cp1" x1="0" y1="0" x2="0" y2="1"><stop offset="0" stop-color="#1b8df0"/><stop offset="0.35" stop-color="#2cb6c9"/><stop offset="0.62" stop-color="#7ccb58"/><stop offset="0.85" stop-color="#f3d21f"/><stop offset="1" stop-color="#f0a020"/></linearGradient><linearGradient id="cp2" x1="0" y1="0" x2="0" y2="1"><stop offset="0" stop-color="#a45cf0"/><stop offset="0.4" stop-color="#e0559f"/><stop offset="0.75" stop-color="#f7806a"/><stop offset="1" stop-color="#f9a03f"/></linearGradient><linearGradient id="cp3" x1="0" y1="0" x2="1" y2="1"><stop offset="0" stop-color="#1767d8"/><stop offset="1" stop-color="#0f3fa6"/></linearGradient></defs>
<path d="M16 0H21.5Q24.8 0 25.6 3.5L26.6 8.2H21Q19 8.2 18.5 10Z" fill="url(#cp3)"/>
<path d="M5.2 1.2Q6.5 0 9 0H19Q21 0 20.5 2L15.2 21Q14.5 23 12 23H3Q-0.5 23 0.3 19L3.5 4Q4 1.8 5.2 1.2Z" fill="url(#cp1)"/>
<path d="M9 23H14.5L13.5 27Q13 30 10.8 28.8Q9.4 27.6 9 23Z" fill="#e8452c"/>
<path d="M21 8.2H30Q34.3 8.2 33.5 12L30 27.5Q29 31.5 25.5 31.5H15Q12.5 31.5 13.3 28.5L18.5 10Q19 8.2 21 8.2Z" fill="url(#cp2)"/><path d="M16.4 14.3H19.2L17.2 21.6H14.4Z" fill="#17263a"/></svg>
<!-- folder -->
<svg style="left:1077px;top:1028px" width="38" height="33" viewBox="0 0 38 33"><defs><linearGradient id="fg" x1="0" y1="0" x2="0" y2="1"><stop offset="0" stop-color="#ffd964"/><stop offset="1" stop-color="#f7c232"/></linearGradient></defs><path d="M0 3Q0 0 3 0H10.5Q12 0 13 1L14.5 2.6V9H0Z" fill="#e5a50f"/><path d="M0 8.5Q0 5.7 3 5.7H11.5L14.5 2.6H35Q38 2.6 38 5.6V29.5Q38 32.5 35 32.5H3Q0 32.5 0 29.5Z" fill="url(#fg)"/><path d="M6.25 25Q6.25 21.9 9.4 21.9H26.8Q29.9 21.9 29.9 25V32.5H6.25Z" fill="#1a84d8"/><path d="M11.1 27H25.2" stroke="#0f4f98" stroke-width="1.6"/></svg>
<!-- thunderbird -->
<svg style="left:1143px;top:1026px" width="38" height="37" viewBox="0 0 38 37"><path d="M4.5 13L7.5 4.5Q9.5 8 12 11Z" fill="#1b62d0"/><circle cx="19.5" cy="20" r="16.3" fill="#2583e8"/><circle cx="25.5" cy="9" r="7" fill="#2583e8"/><path d="M19 3.5Q24 -0.5 30 3L33.5 2.2L32 5.5Q33 7.5 32.5 9.5Q29 4.5 19 3.5Z" fill="#5b62d6"/><path d="M31.5 4L36 5L32.3 7.6Z" fill="#1a59c4"/><circle cx="27.2" cy="6.8" r="0.9" fill="#dfe9fa"/><path d="M3.3 20Q3.5 11 9 6.5Q6 13 8 20Q10 28 19 31Q25 33 31 29Q25 36.5 17 36Q5 34 3.3 20Z" fill="#1453bd"/><path d="M6.5 15Q5.5 22 9.5 27Q7.5 21 8.5 15.5Z" fill="#2f8cf0"/><ellipse cx="18.3" cy="18.5" rx="9" ry="7" fill="#e3eefb"/><path d="M10 15.5L18.3 21.5L26.6 15.5Q24 11.5 18.3 11.5Q12.6 11.5 10 15.5Z" fill="#f5f9ff"/><path d="M9.8 16L18.3 22L26.8 16" fill="none" stroke="#c5d8f2" stroke-width="1"/></svg>
<!-- chrome -->
<div class="a" style="left:1198px;top:1014px;width:60px;height:60px;border-radius:7px;background:#2c3339;border:1px solid #3a4147"></div>
<svg style="left:1209.8px;top:1025.7px" width="36.4" height="36.4" viewBox="-18.2 -18.2 36.4 36.4"><path d="M-15.59 -9A18 18 0 0 1 15.59 -9L0 -9A9 9 0 0 0 -7.79 4.5Z" fill="#e33b2e"/><path d="M15.59 -9A18 18 0 0 1 0 18L7.79 4.5A9 9 0 0 0 0 -9Z" fill="#fbc116"/><path d="M0 18A18 18 0 0 1 -15.59 -9L-7.79 4.5A9 9 0 0 0 7.79 4.5Z" fill="#2aa34a"/><circle r="9.2" fill="#fff"/><circle r="7" fill="#3b7de9"/></svg>
<div class="a" style="left:1216px;top:1068px;width:24px;height:5px;border-radius:2.5px;background:#4cc2ff"></div>
<!-- teams -->
<svg style="left:1274px;top:1026.5px" width="38" height="34" viewBox="0 0 38 34"><circle cx="21" cy="8" r="7" fill="#7b83eb"/><circle cx="32" cy="11" r="4.5" fill="#5059c9"/><path d="M26 17H37Q38 17 38 18V26Q38 31 33 31Q28 31 26 27Z" fill="#5059c9"/><path d="M11 15H29Q30 15 30 16V26Q30 34 21 34Q12 34 11 26Z" fill="#7b83eb"/><rect x="1" y="9" width="19" height="19" rx="2" fill="#4b53bc"/><path d="M6 14H15M10.5 14V24" stroke="#fff" stroke-width="2.4" fill="none"/></svg>
<div class="a" style="left:1292px;top:1019px;width:31px;height:24px;border-radius:12px;background:#4cc2ff"></div>
<div class="a" style="left:1290px;top:1069px;width:9px;height:4px;border-radius:2px;background:#8b9099"></div>
<!-- dolphin -->
<svg style="left:1344px;top:1025px" width="34" height="39" viewBox="0 0 34 39"><path d="M1.2 18.3Q6 11 12.7 9.2Q15 8.5 16.8 7.4Q19 3.5 22.5 1.3Q22.3 5 23.5 7.6Q29.5 11 30.9 18.5Q31.5 24 28.5 29Q26.5 32 24.5 33.5Q25 36 23 37.3Q21 36.8 20 34.8Q17.5 34.2 16.8 31.5Q16.5 28.5 17.8 26.5Q19.5 28.8 21.5 29.8Q24 26 22.5 22.5Q20 19.5 16 20.3Q14 22.8 11.8 22.3Q12.8 20.8 12.5 19.6Q8 19 4.5 20Q2 20 1.2 18.3Z" fill="#2891fa" stroke="#8cc4fb" stroke-width="0.6"/></svg>
<div class="a" style="left:1356px;top:1069px;width:9px;height:4px;border-radius:2px;background:#8b9099"></div>
<!-- tray -->
<svg style="left:1595px;top:1039px" width="17" height="10" viewBox="0 0 17 10"><path d="M1 9L8.5 1.5L16 9" fill="none" stroke="#fff" stroke-width="2"/></svg>
<svg style="left:1642px;top:1031px" width="18" height="26" viewBox="0 0 18 26"><rect x="5" y="1" width="8" height="15" rx="4" fill="none" stroke="#7fd4f2" stroke-width="1.8"/><path d="M1.5 11.5A7.5 7.5 0 0 0 16.5 11.5M9 19V25" fill="none" stroke="#7fd4f2" stroke-width="1.8"/></svg>
<svg style="left:1686px;top:1033.5px" width="26" height="20" viewBox="0 0 26 20"><g fill="none" stroke="#fff" stroke-width="2.2"><path d="M1.8 7.6A15.5 15.5 0 0 1 24.2 7.6"/><path d="M5.8 11.4A10 10 0 0 1 20.2 11.4"/><path d="M9.6 15A4.8 4.8 0 0 1 16.4 15"/></g><circle cx="13" cy="17.6" r="1.8" fill="#fff"/></svg>
<svg style="left:1723px;top:1033px" width="25" height="22" viewBox="0 0 25 22"><g fill="none" stroke="#fff" stroke-width="1.9"><path d="M1.2 7.8H4.8L9.6 3.4V18.6L4.8 14.2H1.2Z" stroke-linejoin="round"/><path d="M13.2 7.6A4.6 4.6 0 0 1 13.2 14.4"/><path d="M16.2 4.8A8.6 8.6 0 0 1 16.2 17.2"/><path d="M19.3 2.2A12.3 12.3 0 0 1 19.3 19.8"/></g></svg>
<svg style="left:1757px;top:1031px" width="27" height="22" viewBox="0 0 27 22"><g fill="none" stroke="#fff" stroke-width="1.8"><rect x="2" y="6" width="20" height="13" rx="3"/><path d="M24 10V15" stroke-width="2.4" stroke-linecap="round"/></g><path d="M7 0L2 9H6L4 15L11 6H7L9 0Z" fill="#fff" stroke="#1b293b" stroke-width="1"/><rect x="8" y="9" width="11" height="7" rx="1" fill="#fff"/></svg>

<span class="t" style="left:77.0px;top:1023.0px;font-size:18px;font-weight:400;color:#ffffff;letter-spacing:0.06px;">Thunderstorm w...</span>
<span class="t" style="left:76.0px;top:1047.0px;font-size:18px;font-weight:400;color:#c8cdd4;letter-spacing:0.14px;">In effect</span>
<span class="t" style="left:53.7px;top:1022.0px;font-size:15.5px;font-weight:400;color:#ffffff;">4</span>
<span class="t" style="left:653.8px;top:1035.0px;font-size:21.5px;font-weight:400;color:#5a5a5a;letter-spacing:-0.47px;transform:scaleX(0.9343);">Search</span>
<span class="t" style="left:1298.0px;top:1023.0px;font-size:16.5px;font-weight:400;color:#000000;letter-spacing:0.32px;">45</span>
<span class="t" style="left:1815.0px;top:1023.0px;font-size:18px;font-weight:400;color:#ffffff;letter-spacing:0.16px;">11:53 AM</span>
<span class="t" style="left:1808.0px;top:1046.0px;font-size:18px;font-weight:400;color:#ffffff;letter-spacing:0.32px;">10/3/2025</span>
</div>
</body>
</html>
